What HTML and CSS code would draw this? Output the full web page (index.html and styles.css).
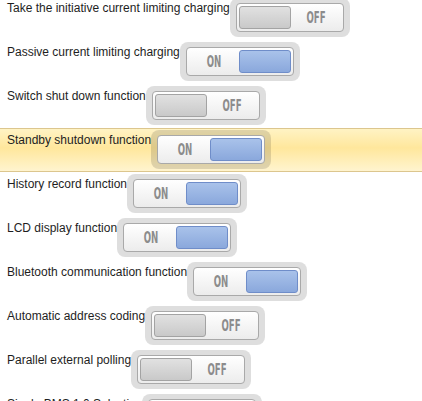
FILE: index.html
```html
<!DOCTYPE html>
<html lang="en">
<head>
  <meta charset="UTF-8" />
  <title>Protection Settings</title>
  <link rel="stylesheet" href="styles.css">
</head>
<body>

  <ul class="options">
    <li class="option">
      <span class="label">Take the initiative current limiting charging</span>
      <span class="toggle off"><span class="track"><span class="thumb"></span><span class="state">OFF</span></span></span>
    </li>
    <li class="option">
      <span class="label">Passive current limiting charging</span>
      <span class="toggle on"><span class="track"><span class="thumb"></span><span class="state">ON</span></span></span>
    </li>
    <li class="option">
      <span class="label">Switch shut down function</span>
      <span class="toggle off"><span class="track"><span class="thumb"></span><span class="state">OFF</span></span></span>
    </li>
    <li class="option selected">
      <span class="label">Standby shutdown function</span>
      <span class="toggle on"><span class="track"><span class="thumb"></span><span class="state">ON</span></span></span>
    </li>
    <li class="option">
      <span class="label">History record function</span>
      <span class="toggle on"><span class="track"><span class="thumb"></span><span class="state">ON</span></span></span>
    </li>
    <li class="option">
      <span class="label">LCD display function</span>
      <span class="toggle on"><span class="track"><span class="thumb"></span><span class="state">ON</span></span></span>
    </li>
    <li class="option">
      <span class="label">Bluetooth communication function</span>
      <span class="toggle on"><span class="track"><span class="thumb"></span><span class="state">ON</span></span></span>
    </li>
    <li class="option">
      <span class="label">Automatic address coding</span>
      <span class="toggle off"><span class="track"><span class="thumb"></span><span class="state">OFF</span></span></span>
    </li>
    <li class="option">
      <span class="label">Parallel external polling</span>
      <span class="toggle off"><span class="track"><span class="thumb"></span><span class="state">OFF</span></span></span>
    </li>
    <li class="option">
      <span class="label">Single BMS 1.0 Selection</span>
      <span class="toggle off"><span class="track"><span class="thumb"></span><span class="state">OFF</span></span></span>
    </li>
  </ul>

</body>
</html>
```

FILE: styles.css
```css
html, body {
  margin: 0;
  height: 100%;
  overflow: hidden;
  background: white;
}

body {
  font-family: "Liberation Sans", Arial, sans-serif;
  font-size: 12px;
  color: #1e1e1e;
}

.options {
  list-style: none;
  margin: -4px 0 0 0;
  padding: 0;
}

.option {
  display: flex;
  align-items: flex-start;
  height: 44px;
  box-sizing: border-box;
  padding: 2px 0 0 7px;
  border-top: 1px solid transparent;
  border-bottom: 1px solid transparent;
}

.option.selected {
  border-color: #dcc68e;
  background: linear-gradient(#fff3c4, #ffe79c 45%, #fff4cf);
}

.label {
  padding-top: 1px;
  line-height: 16px;
}

.toggle {
  display: block;
  padding: 5px 6px;
  background: rgba(0, 0, 0, 0.13);
  border-radius: 8px;
  margin-top: -1px;
}

.track {
  display: flex;
  width: 108px;
  height: 29px;
  box-sizing: border-box;
  padding: 2px;
  border: 1px solid #a9a9a9;
  border-radius: 4px;
  background: linear-gradient(#ffffff, #ececec);
}

.toggle.on .track {
  flex-direction: row-reverse;
}

.thumb {
  width: 52px;
  box-sizing: border-box;
  border: 1px solid #a3a3a3;
  border-radius: 3px;
  background: linear-gradient(#e1e1e1, #c9c9c9);
}

.toggle.on .thumb {
  border-color: #6f8dc9;
  background: linear-gradient(#a9c2ea, #8aa8dc);
}

.state {
  flex: 1;
  text-align: center;
  font-family: "DejaVu Sans Condensed", "DejaVu Sans", sans-serif;
  font-weight: bold;
  font-size: 16px;
  line-height: 23px;
  color: #8c8c8c;
  transform: scaleX(0.6);
}
```
